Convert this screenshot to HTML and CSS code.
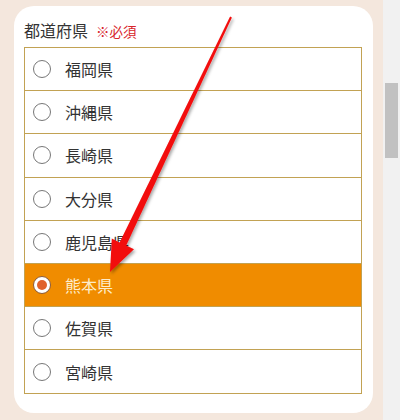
FILE: index.html
```html
<!DOCTYPE html>
<html lang="ja">
<head>
<meta charset="utf-8">
<link rel="stylesheet" href="styles.css">
</head>
<body>
<div class="page">
  <main class="main">
    <section class="card">
      <div class="label">都道府県<span class="req">※必須</span></div>
      <ul class="list">
        <li class="row"><span class="radio"></span><span class="name">福岡県</span></li>
        <li class="row"><span class="radio"></span><span class="name">沖縄県</span></li>
        <li class="row"><span class="radio"></span><span class="name">長崎県</span></li>
        <li class="row"><span class="radio"></span><span class="name">大分県</span></li>
        <li class="row"><span class="radio"></span><span class="name">鹿児島県</span></li>
        <li class="row selected"><span class="radio"></span><span class="name">熊本県</span></li>
        <li class="row"><span class="radio"></span><span class="name">佐賀県</span></li>
        <li class="row"><span class="radio"></span><span class="name">宮崎県</span></li>
      </ul>
    </section>
  </main>
  <div class="scrollbar"><div class="thumb"></div></div>
</div>
<svg class="arrow" width="400" height="420" viewBox="0 0 400 420">
  <defs>
    <filter id="sh" x="-20%" y="-20%" width="140%" height="140%">
      <feDropShadow dx="1.5" dy="2" stdDeviation="1.8" flood-color="#000" flood-opacity="0.35"/>
    </filter>
  </defs>
  <polygon filter="url(#sh)" fill="#f20d0d"
    points="231.9,17.4 126.2,245.6 134,249.2 110,272 111.8,238.6 119.6,242.4 230.1,16.6"/>
</svg>
</body>
</html>
```
FILE: styles.css
```css
html, body {
  margin: 0;
  padding: 0;
}
body {
  width: 400px;
  height: 420px;
  overflow: hidden;
  background: #f4e7dd;
  font-family: "Noto Sans CJK JP", "Noto Sans", sans-serif;
  position: relative;
}
.page {
  display: flex;
  height: 420px;
}
.main {
  width: 383px;
  box-sizing: border-box;
  padding: 6px 10px 7px 14px;
}
.card {
  background: #fff;
  border-radius: 20px;
  height: 407px;
  box-sizing: border-box;
  padding: 12px 11px 20px 10px;
}
.label {
  font-size: 16px;
  line-height: 24px;
  color: #333;
  margin-bottom: 4px;
}
.req {
  font-size: 13.5px;
  color: #d8252a;
  margin-left: 8px;
}
.list {
  list-style: none;
  margin: 0;
  padding: 0;
  border: 1px solid #c2a253;
}
.row {
  display: flex;
  align-items: center;
  height: 42.2px;
  border-bottom: 1px solid #c2a253;
  padding-left: 8px;
  gap: 14px;
  font-size: 16px;
  color: #333;
}
.row:last-child {
  border-bottom: none;
  height: 43px;
}
.radio {
  width: 18px;
  height: 18px;
  box-sizing: border-box;
  border: 1px solid #777;
  border-radius: 50%;
  background: #fff;
  display: flex;
  align-items: center;
  justify-content: center;
  flex: none;
}
.selected {
  background: #f08c00;
  color: #fdeccb;
}
.selected .radio {
  border: 1px solid #8a5a3a;
}
.selected .radio::after {
  content: "";
  width: 10px;
  height: 10px;
  border-radius: 50%;
  background: #e0622c;
}
.scrollbar {
  width: 17px;
  background: #f1f1f1;
  padding-top: 83px;
  box-sizing: border-box;
  display: flex;
  justify-content: center;
}
.thumb {
  width: 13px;
  height: 75px;
  background: #c1c1c1;
}
.arrow {
  position: absolute;
  left: 0;
  top: 0;
  pointer-events: none;
}
```
